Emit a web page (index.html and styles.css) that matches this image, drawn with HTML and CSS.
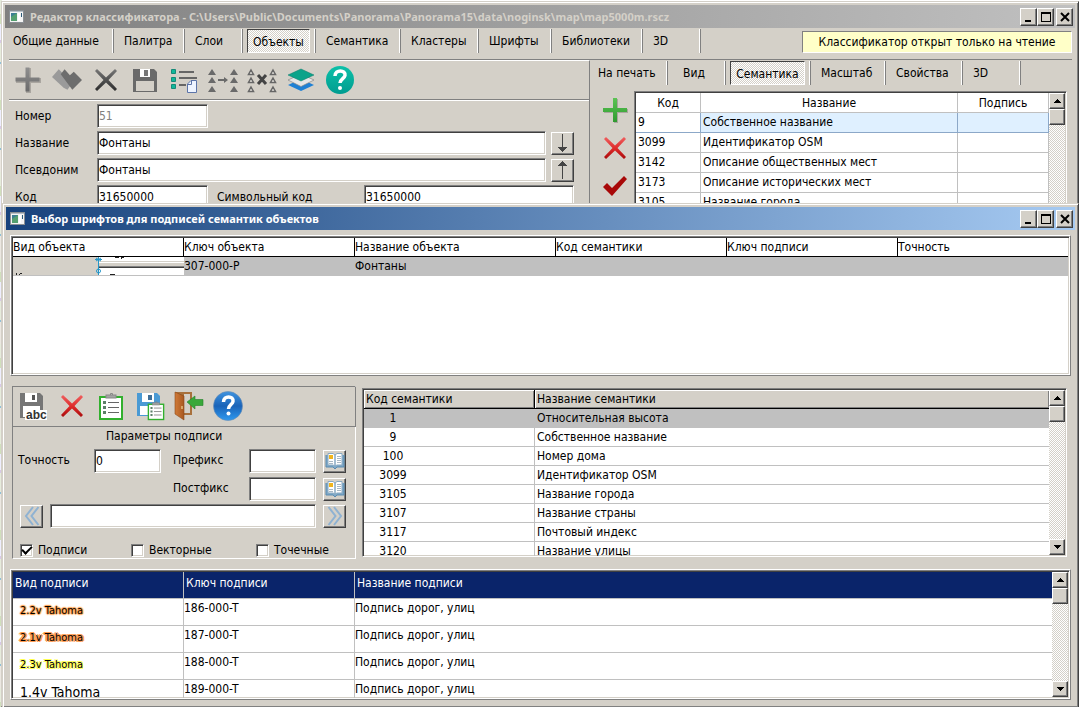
FILE: index.html
```html
<!DOCTYPE html>
<html lang="ru">
<head>
<meta charset="utf-8">
<title>Редактор классификатора</title>
<link rel="stylesheet" href="styles.css">
</head>
<body>
<svg class="defs" width="0" height="0" aria-hidden="true">
  <defs>
    <linearGradient id="gDark" x1="0" y1="0" x2="0" y2="1"><stop offset="0" stop-color="#777"/><stop offset="1" stop-color="#2c2c2c"/></linearGradient>
    <linearGradient id="gGrey" x1="0" y1="0" x2="0" y2="1"><stop offset="0" stop-color="#8f8f8f"/><stop offset="1" stop-color="#6a6a6a"/></linearGradient>
    <linearGradient id="gRed" x1="0" y1="0" x2="0" y2="1"><stop offset="0" stop-color="#f06060"/><stop offset=".55" stop-color="#dc2828"/><stop offset="1" stop-color="#a80c0c"/></linearGradient>
    <linearGradient id="gGreen" x1="0" y1="0" x2="0" y2="1"><stop offset="0" stop-color="#5cc454"/><stop offset="1" stop-color="#2f9a30"/></linearGradient>
    <linearGradient id="gTeal" x1="0" y1="0" x2="0" y2="1"><stop offset="0" stop-color="#0cc0a8"/><stop offset="1" stop-color="#009c90"/></linearGradient>
    <linearGradient id="gBlue" x1="0" y1="0" x2="0" y2="1"><stop offset="0" stop-color="#3f94e0"/><stop offset=".5" stop-color="#1a63b8"/><stop offset="1" stop-color="#2f9af0"/></linearGradient>
    <linearGradient id="gDoor" x1="0" y1="0" x2="1" y2="0"><stop offset="0" stop-color="#d07a38"/><stop offset="1" stop-color="#a85820"/></linearGradient>
    <symbol id="app" viewBox="0 0 15 13"><rect x=".5" y=".5" width="14" height="12" fill="#f4f4f4" stroke="#8a8f94"/><rect x="1" y="1" width="13" height="1" fill="#b8c0c8"/><rect x="2" y="3" width="6" height="8" fill="#3d7f92"/><path d="M2 11V7l6-4v8z" fill="#55a070"/><rect x="9" y="3" width="2" height="8" fill="#fff"/><rect x="12" y="3" width="1" height="4" fill="#2c5a78"/></symbol>
    <symbol id="cross" viewBox="0 0 24 24"><path d="M1 3 3 1l9 8.500L21 1l2 2-8.500 9L23 21l-2 2-9-8.500L3 23l-2-2 8.500-9z"/></symbol>
    <symbol id="book" viewBox="0 0 20 18"><path d="M1 3v12h7l2 2 2-2h7V3" fill="#7fa9c8" stroke="#5b8bb0"/><path d="M3 1.500h5l2 1.500v11l-2-1H3zM17 1.500h-5l-2 1.500v11l2-1h5z" fill="#fff" stroke="#88a9c2"/><rect x="4" y="3" width="4" height="4" fill="#f0b41e"/><path d="M4 9.500h4M4 11.500h4M12 4.500h4M12 6.500h4M12 8.500h4M12 10.500h4" stroke="#a9b8c4"/></symbol>
    <symbol id="chev" viewBox="0 0 16 20"><path d="M9 1 2 10l7 9M14.500 1l-7 9 7 9" fill="none" stroke="#8fb2d2" stroke-width="2"/></symbol>
    <symbol id="up" viewBox="0 0 7 4"><path d="M3 0h1v1h1v1h1v1h1v1H0V3h1V2h1V1h1z"/></symbol>
    <symbol id="min" viewBox="0 0 10 10"><path d="M1 8h6v2H1z"/></symbol>
    <symbol id="max" viewBox="0 0 10 10"><path d="M0 0h10v10H0zM1 2v7h8V2z" fill-rule="evenodd"/></symbol>
    <symbol id="close" viewBox="0 0 10 10"><path d="M1 1l8 8M9 1 1 9" stroke="#000" stroke-width="2"/></symbol>
    <symbol id="clip" viewBox="0 0 26 30"><path d="M12.500 5V2.500h2V5" fill="none" stroke="#888"/><rect x="2" y="6" width="22" height="22" fill="#fff" stroke="#32b02e" stroke-width="2"/><rect x="8" y="4" width="10" height="3" fill="#a4a4a4" stroke="#888"/><path d="M5 10h3v3H5zM5 15h3v3H5zM5 20h3v3H5z" fill="#5c8068"/><path d="M10 11.500h11M10 16.500h11M10 21.500h11" stroke="#666"/></symbol>
  </defs>
</svg>

<main class="desktop">
<div class="map-strip" aria-hidden="true"></div>

<section class="window editor" aria-label="Редактор классификатора">
  <header class="titlebar inactive">
    <svg class="app-icon"><use href="#app"/></svg>
    <h1>Редактор классификатора - C:\Users\Public\Documents\Panorama\Panorama15\data\noginsk\map\map5000m.rscz</h1>
    <div class="caption">
      <button aria-label="Свернуть"><svg><use href="#min"/></svg></button><button aria-label="Развернуть"><svg><use href="#max"/></svg></button><button class="x" aria-label="Закрыть"><svg><use href="#close"/></svg></button>
    </div>
  </header>

  <div class="topline">
    <nav class="tabs main-tabs">
      <button>Общие данные</button><button>Палитра</button><button>Слои</button><span class="active-tab"><button>Объекты</button></span><button>Семантика</button><button>Кластеры</button><button>Шрифты</button><button>Библиотеки</button><button>3D</button>
    </nav>
    <div class="notice">Классификатор открыт только на чтение</div>
  </div>

  <div class="editor-body">
    <div class="object-pane">
      <div class="toolbar main-toolbar">
        <button aria-label="Добавить"><svg viewBox="0 0 30 30"><path d="M13 3h5v10h10v5H18v10h-5V18H3v-5h10z" fill="#aaa6a0"/><path d="M12.500 2.500h4v10h10v4h-10v10h-4v-10h-10v-4h10z" fill="url(#gGrey)"/></svg></button>
        <button aria-label="Копировать"><svg viewBox="0 0 31 30"><path d="M0 12 7 4l14 14-5 7-4-2z" fill="#9a9a9a"/><path d="m9 9 4-5 5.500 6 4-3.500L31 15 21 25z" fill="#6d6d6d"/></svg></button>
        <button aria-label="Удалить"><svg viewBox="0 0 30 30" fill="url(#gDark)"><use href="#cross" x="3" y="3" width="24" height="24"/></svg></button>
        <button aria-label="Сохранить"><svg viewBox="0 0 30 30"><path d="M3 4h21l3 3v20H3z" fill="#6a6a6a"/><path d="M10 4h10v8H10z" fill="#fff"/><rect x="14" y="5" width="4" height="6" fill="#777"/><rect x="6" y="16" width="18" height="10" fill="#d4d0c8"/></svg></button>
        <button aria-label="Список"><svg viewBox="0 0 30 30"><path d="M2.500 4.500h4v4h-4zM2.500 12.500h4v4h-4zM2.500 19.500h4v4h-4z" fill="#10b89a" stroke="#168a78"/><path d="M10 7h15M10 13h18M10 20h7" stroke="#666" stroke-width="2"/><path d="M18.500 19l3.500-3.500h5.500v12h-9z" fill="#eef4ff" stroke="#5c74a8"/><path d="M18.500 19.500h4v-4" fill="none" stroke="#5c74a8"/></svg></button>
        <button aria-label="Заменить"><svg viewBox="0 0 30 30" fill="#6a6a6a"><path d="m4 4 4 6H0zM4 12l4 6H0zM4 21l4 6H0zM26 4l4 6h-8zM26 12l4 6h-8zM26 21l4 6h-8zM10 14h6v-2l4 3-4 3v-2h-6z"/></svg></button>
        <button aria-label="Исключить"><svg viewBox="0 0 30 30"><path d="m4 5 2.500 4.500h-5zM4 13l2.500 4.500h-5zM4 22l2.500 4.500h-5zM26 5l2.500 4.500h-5zM26 13l2.500 4.500h-5zM26 22l2.500 4.500h-5z" fill="#e8e6e0" stroke="#666" stroke-width="1.500"/><path d="m11 10 8 9M19 10l-8 9" stroke="#444" stroke-width="3"/></svg></button>
        <button aria-label="Слои"><svg viewBox="0 0 30 30"><path d="m2 20 13-6 13 6-13 6z" fill="#1f80d4"/><path d="m2 15 13-6 13 6-13 6.500z" fill="#e6e6e6" stroke="#888" stroke-width=".7"/><path d="m2 10 13-6 13 6-13 6z" fill="#0ba38a" stroke="#087a68" stroke-width=".5"/></svg></button>
        <button aria-label="Помощь"><svg viewBox="0 0 30 30"><circle cx="15" cy="15" r="14" fill="url(#gTeal)"/><path d="M10 11c0-7 11-6.500 10-.5-.5 3-5 3.500-5 7.500" fill="none" stroke="#fff" stroke-width="3.500"/><circle cx="15" cy="23" r="2" fill="#fff"/></svg></button>
      </div>
      <form class="object-form">
        <div class="field"><label for="num">Номер</label><input id="num" class="short" value="51" disabled></div>
        <div class="field"><label for="name">Название</label><input id="name" value="Фонтаны"><button type="button" class="sq" aria-label="Вниз"><svg viewBox="0 0 9 18"><path d="M4 0h1v13h4v1H8v1H7v1H6v1H5v1H4v-1H3v-1H2v-1H1v-1H0v-1h4z" fill="#444"/></svg></button></div>
        <div class="field"><label for="alias">Псевдоним</label><input id="alias" value="Фонтаны"><button type="button" class="sq" aria-label="Вверх"><svg viewBox="0 0 9 18"><path d="M4 18h1V5h4V4H8V3H7V2H6V1H5V0H4v1H3v1H2v1H1v1H0v1h4z" fill="#444"/></svg></button></div>
        <div class="field"><label for="code">Код</label><input id="code" class="short" value="31650000"><label class="second" for="sym">Символьный код</label><input id="sym" value="31650000"></div>
      </form>
    </div>

    <div class="side-pane">
      <nav class="tabs side-tabs">
        <button>На печать</button><button>Вид</button><span class="active-tab"><button>Семантика</button></span><button>Масштаб</button><button>Свойства</button><button>3D</button>
      </nav>
      <div class="side-body">
        <div class="side-tools">
          <button aria-label="Добавить"><svg viewBox="0 0 26 26"><path d="M12 2h4v10h10v4H16v10h-4V16H2v-4h10z" fill="#a9a59e"/><path d="M11 1h4v10h10v4H15v10h-4V15H1v-4h10z" fill="url(#gGreen)"/></svg></button>
          <button aria-label="Удалить"><svg viewBox="0 0 26 26" fill="url(#gRed)"><use href="#cross" x="1" y="1" width="24" height="24"/></svg></button>
          <button aria-label="Применить"><svg viewBox="0 0 26 26"><path d="m1 14 4-4 5 5L22 3l3 3-15 17z" fill="#a80808"/></svg></button>
        </div>
        <div class="sunken grid-box">
          <table class="semantics">
            <colgroup><col class="c-code"><col><col class="c-label"></colgroup>
            <thead><tr><th>Код</th><th>Название</th><th>Подпись</th></tr></thead>
            <tbody>
              <tr class="current"><td>9</td><td>Собственное название</td><td></td></tr>
              <tr><td>3099</td><td>Идентификатор OSM</td><td></td></tr>
              <tr><td>3142</td><td>Описание общественных мест</td><td></td></tr>
              <tr><td>3173</td><td>Описание исторических мест</td><td></td></tr>
              <tr><td>3105</td><td>Название города</td><td></td></tr>
            </tbody>
          </table>
          <div class="scroll"><button aria-label="Вверх"><svg><use href="#up"/></svg></button><i class="thumb"></i></div>
        </div>
      </div>
    </div>
  </div>
</section>

<section class="window fonts" aria-label="Выбор шрифтов">
  <header class="titlebar">
    <svg class="app-icon"><use href="#app"/></svg>
    <h1>Выбор шрифтов для подписей семантик объектов</h1>
    <div class="caption">
      <button aria-label="Свернуть"><svg><use href="#min"/></svg></button><button aria-label="Развернуть"><svg><use href="#max"/></svg></button><button class="x" aria-label="Закрыть"><svg><use href="#close"/></svg></button>
    </div>
  </header>

  <div class="fonts-body">
    <div class="raised objects-frame"><div class="sunken grid-box">
      <table class="objects">
        <colgroup><col class="w171"><col class="w171"><col class="w201"><col class="w171"><col class="w171"><col></colgroup>
        <thead><tr><th>Вид объекта</th><th>Ключ объекта</th><th>Название объекта</th><th>Код семантики</th><th>Ключ подписи</th><th>Точность</th></tr></thead>
        <tbody><tr><td class="preview"><svg width="171" height="18" viewBox="0 0 171 18" aria-hidden="true"><rect width="171" height="18" fill="#d4d0c8"/><rect x="85" width="86" height="5" fill="#fff"/><path d="M85 4.500h86" stroke="#d4d0c8"/><rect x="85" y="5" width="86" height="1" fill="#fff"/><rect x="86" y="10" width="85" height="8" fill="#fff"/><path d="M85 9.500h86" stroke="#808080"/><path d="M86 10.500h85M85.500 9v9" stroke="#404040"/><path d="M102 .500h4M108 .500h3M108.500 0v2M97 17.500h5M3.500 16v2M6 17.500h1M7 16.500h2" stroke="#222"/><path d="M85.500 0v18M82 2.500h7M83 1l5 3M88 1l-5 3" stroke="#2596c8"/><circle cx="85.500" cy="14" r="2" fill="none" stroke="#2596c8"/></svg></td><td>307-000-P</td><td>Фонтаны</td><td></td><td></td><td></td></tr></tbody>
      </table>
    </div></div>

    <div class="middle">
      <form class="params">
        <div class="toolbar param-toolbar">
          <button type="button" aria-label="Сохранить подпись"><svg viewBox="0 0 30 30"><path d="M2 2h20l3 3v22H2z" fill="#767676"/><path d="M7 2h12v9H7z" fill="#fff"/><rect x="14" y="4" width="3" height="5" fill="#555"/><path d="M5 15h17v11H5z" fill="#fff"/><rect x="7" y="19" width="22" height="10" fill="#fff"/><text x="8" y="28" class="abc">abc</text></svg></button>
          <button type="button" aria-label="Удалить"><svg viewBox="0 0 30 30" fill="url(#gRed)"><use href="#cross" x="3" y="3" width="24" height="24"/></svg></button>
          <button type="button" aria-label="Список"><svg viewBox="0 0 30 30"><use href="#clip" x="2" y="0" width="26" height="30"/></svg></button>
          <button type="button" aria-label="Сохранить список"><svg viewBox="0 0 30 30"><path d="M2 2h20l3 3v20H2z" fill="#4a9ad4"/><path d="M7 2h12v9H7z" fill="#fff"/><rect x="13" y="4" width="4" height="5" fill="#3f6f98"/><path d="M5 15h18v9H5z" fill="#fff"/><use href="#clip" x="12" y="9" width="18" height="21"/></svg></button>
          <button type="button" aria-label="Выход"><svg viewBox="0 0 30 30"><path d="M1 1h17v23h-8z" fill="#a8703c"/><path d="M10 3h6v19h-6z" fill="#d4d0c8"/><path d="m1 1 9 4v24l-9-6z" fill="url(#gDoor)" stroke="#8a4818" stroke-width=".6"/><path d="M8 15v3" stroke="#fff0b0"/><path d="m13 11 8-6v3.500h8v6h-8V18z" fill="#39a83a" stroke="#23802a" stroke-width=".6"/></svg></button>
          <button type="button" aria-label="Помощь"><svg viewBox="0 0 30 30"><circle cx="15" cy="15" r="14.500" fill="url(#gBlue)" stroke="#6a8cb0" stroke-width=".6"/><path d="M10.500 11c0-7 10.500-6.500 9.500-.5-.5 3-4.500 3.500-4.500 7.500" fill="none" stroke="#fff" stroke-width="3.500"/><circle cx="15.500" cy="22.500" r="2" fill="#fff"/></svg></button>
        </div>
        <div class="param-title">Параметры подписи</div>
        <div class="param-grid">
          <label for="prec">Точность</label><input id="prec" value="0">
          <label class="third" for="prefix">Префикс</label><input id="prefix"><button type="button" class="sq" aria-label="Выбрать префикс"><svg class="book"><use href="#book"/></svg></button>
          <label class="third" for="postfix">Постфикс</label><input id="postfix"><button type="button" class="sq" aria-label="Выбрать постфикс"><svg class="book"><use href="#book"/></svg></button>
        </div>
        <div class="pager">
          <button type="button" class="sq" aria-label="Назад"><svg class="chev"><use href="#chev"/></svg></button>
          <input aria-label="Текст подписи">
          <button type="button" class="sq" aria-label="Вперёд"><svg class="chev flip"><use href="#chev"/></svg></button>
        </div>
        <div class="checks">
          <label><input type="checkbox" checked>Подписи</label>
          <label><input type="checkbox">Векторные</label>
          <label><input type="checkbox">Точечные</label>
        </div>
      </form>

      <div class="sunken grid-box codes-box">
        <table class="codes">
          <colgroup><col class="w171"><col></colgroup>
          <thead><tr><th>Код семантики</th><th>Название семантики</th></tr></thead>
          <tbody>
            <tr class="selected"><td>1</td><td>Относительная высота</td></tr>
            <tr><td>9</td><td>Собственное название</td></tr>
            <tr><td>100</td><td>Номер дома</td></tr>
            <tr><td>3099</td><td>Идентификатор OSM</td></tr>
            <tr><td>3105</td><td>Название города</td></tr>
            <tr><td>3107</td><td>Название страны</td></tr>
            <tr><td>3117</td><td>Почтовый индекс</td></tr>
            <tr><td>3120</td><td>Название улицы</td></tr>
          </tbody>
        </table>
        <div class="scroll"><button aria-label="Вверх"><svg><use href="#up"/></svg></button><i class="thumb"></i><button class="down" aria-label="Вниз"><svg><use href="#up"/></svg></button></div>
      </div>
    </div>

    <div class="raised labels-frame"><div class="sunken grid-box">
      <table class="labels">
        <colgroup><col class="w171"><col class="w171"><col></colgroup>
        <thead><tr><th>Вид подписи</th><th>Ключ подписи</th><th>Название подписи</th></tr></thead>
        <tbody>
          <tr><td class="sample orange">2.2v Tahoma</td><td>186-000-T</td><td>Подпись дорог, улиц</td></tr>
          <tr><td class="sample amber">2.1v Tahoma</td><td>187-000-T</td><td>Подпись дорог, улиц</td></tr>
          <tr><td class="sample yellow">2.3v Tahoma</td><td>188-000-T</td><td>Подпись дорог, улиц</td></tr>
          <tr><td class="sample plain">1.4v Tahoma</td><td>189-000-T</td><td>Подпись дорог, улиц</td></tr>
        </tbody>
      </table>
      <div class="scroll"><button aria-label="Вверх"><svg><use href="#up"/></svg></button><i class="thumb"></i><button class="down" aria-label="Вниз"><svg><use href="#up"/></svg></button></div>
    </div></div>
  </div>
</section>
</main>
</body>
</html>
```
FILE: styles.css
```css
* { box-sizing: border-box; }

:root {
  --face: #d4d0c8;
  --shadow: #808080;
  --dark: #404040;
  --line: #c0c0c0;
}

body {
  margin: 0;
  background: #fff;
  color: #000;
  font: 12px/16px "DejaVu Sans Condensed", "DejaVu Sans", sans-serif;
}

button, input { font: inherit; color: inherit; margin: 0; padding: 0; border-radius: 0; outline: 0; }
button { background: none; border: 0; }
svg { display: block; }
.defs { position: absolute; }

.desktop { position: relative; height: 100vh; min-height: 480px; overflow: hidden; }

.map-strip {
  position: absolute;
  left: 0; top: 0; bottom: 0;
  width: 2px;
  background: repeating-linear-gradient(#e6ecdc 0 14px, #d0e0bc 14px 24px, #eef 24px 40px, #d8c8e8 40px 43px, #e6ecdc 43px 62px, #90c0d8 62px 64px, #ece8e2 64px 86px);
}

/* windows */
.window {
  position: absolute;
  right: 1px;
  display: flex;
  flex-direction: column;
  padding: 3px;
  background: var(--face);
  border: 1px solid;
  border-color: var(--face) var(--dark) var(--dark) var(--face);
  box-shadow: inset 1px 1px #fff, inset -1px -1px var(--shadow);
}
.editor { left: 1px; top: 1px; bottom: 0; }
.fonts { left: 2px; top: 203px; bottom: 0; padding-bottom: 1px; border-bottom: 0; }

.titlebar {
  display: flex;
  align-items: center;
  flex: none;
  height: 23px;
  padding: 0 2px 0 4px;
  background: linear-gradient(90deg, #17427c, #a6caf2);
  color: #fff;
}
.titlebar.inactive { background: linear-gradient(90deg, #808080, #c0c0c0); color: var(--face); }
.titlebar h1 { flex: 1; margin: 0 0 0 6px; font: bold 11px/16px "Noto Sans", "DejaVu Sans Condensed", sans-serif; white-space: nowrap; overflow: hidden; }
.app-icon { width: 15px; height: 13px; }
.caption { display: flex; }
.caption button { display: grid; place-items: center; width: 17px; height: 18px; }
.caption .x { margin-left: 2px; }
.caption svg { width: 10px; height: 10px; }

.caption button, .scroll button, .thumb, .sq {
  background: var(--face);
  border: 1px solid;
  border-color: #fff var(--dark) var(--dark) #fff;
  box-shadow: inset -1px -1px var(--shadow);
}

/* tabs */
.topline { display: flex; justify-content: space-between; align-items: flex-start; height: 31px; padding: 1px 3px 0 0; }
.tabs { display: grid; height: 24px; }
.tabs > button, .active-tab { border-right: 1px solid var(--shadow); box-shadow: inset -1px 0 #fff; white-space: nowrap; }
.tabs > button { text-align: left; padding-left: 10px; }
.active-tab { display: flex; padding: 0 5px 0 4px; }
.active-tab button {
  flex: 1;
  padding-top: 2px;
  border: 1px solid;
  border-color: var(--dark) #fff #fff var(--dark);
  background: conic-gradient(#fff 25%, var(--face) 0 50%, #fff 0 75%, var(--face) 0) 0 0 / 2px 2px;
}
.main-tabs { grid-template-columns: 109px 71px 58px 73px 85px 78px 73px 91px 58px; }
.main-tabs > button:first-child, .side-tabs > button:first-child { padding-left: 8px; }
.side-tabs { grid-template-columns: 78px 58px 85px 75px 77px 58px; }
.side-tabs > button:nth-child(2) { padding-left: 15px; }

.notice {
  width: 270px;
  margin-top: 2px;
  line-height: 20px;
  text-align: center;
  white-space: nowrap;
  background: #ffffc8;
  border: 1px solid;
  border-color: var(--shadow) #fff #fff var(--shadow);
}

/* editor */
.editor-body { display: flex; flex: 1; min-height: 0; margin: 0 3px 0 4px; border-top: 1px solid var(--shadow); overflow: hidden; }
.object-pane { flex: 1; min-width: 0; border-top: 1px solid #fff; border-right: 1px solid var(--shadow); }
.toolbar { display: flex; gap: 9px; align-items: center; }
.toolbar button, .toolbar svg { width: 30px; height: 30px; }
.main-toolbar { height: 39px; padding-left: 4px; border-bottom: 1px solid var(--shadow); box-shadow: 0 1px #fff; }

.object-form { display: grid; gap: 3px; padding: 4px 15px 0 6px; }
.field { display: flex; align-items: center; }
.field label { width: 82px; flex: none; }
.field .second { width: 147px; margin-left: 9px; }
.field input { flex: 1; min-width: 0; }
.field input.short { flex: none; width: 111px; }
.field .sq { margin-left: 5px; }
.sq { display: grid; place-items: center; width: 23px; height: 23px; flex: none; }
.sq svg { width: 9px; height: 18px; }
.sq .book { width: 20px; height: 18px; }
.sq .chev { width: 16px; height: 20px; }
.sq .flip { transform: scaleX(-1); }

input:not([type="checkbox"]) {
  height: 24px;
  width: 100%;
  padding: 0 1px;
  background: #fff;
  border: 1px solid;
  border-color: var(--shadow) #fff #fff var(--shadow);
  box-shadow: inset 1px 1px var(--dark), inset -1px -1px var(--face);
}
input:disabled { color: var(--shadow); }

.side-pane { width: 482px; display: flex; flex-direction: column; }
.side-tabs { margin-top: 1px; }
.side-body { display: flex; flex: 1; min-height: 0; margin: 6px 5px 0 0; }
.side-tools { display: grid; align-content: start; gap: 12px; width: 44px; padding: 6px 0 0 12px; }
.side-tools svg { width: 26px; height: 26px; }

/* frames and grids */
.raised { border: 1px solid; border-color: #fff var(--shadow) var(--shadow) #fff; display: flex; min-height: 0; }
.sunken {
  flex: 1;
  min-width: 0;
  background: #fff;
  border: 1px solid;
  border-color: var(--shadow) #fff #fff var(--shadow);
  padding: 1px;
  box-shadow: inset 1px 1px var(--dark), inset -1px -1px var(--face);
}
.grid-box { display: flex; align-items: flex-start; overflow: hidden; }
table { flex: 1; min-width: 0; table-layout: fixed; border-spacing: 0; }
th, td { padding: 0; text-align: left; font-weight: normal; white-space: nowrap; overflow: hidden; }
.w171 { width: 171px; }
.w201 { width: 201px; }

.scroll {
  align-self: stretch;
  display: flex;
  flex-direction: column;
  width: 16px;
  background: conic-gradient(#fff 25%, var(--face) 0 50%, #fff 0 75%, var(--face) 0) 0 0 / 2px 2px;
}
.scroll button { display: grid; place-items: center; height: 16px; width: 16px; flex: none; }
.scroll svg { width: 7px; height: 4px; }
.thumb { height: 16px; flex: none; }
.down { margin-top: auto; }
.down svg { transform: scaleY(-1); }

.semantics th { height: 20px; text-align: center; border: solid var(--line); border-width: 0 1px 1px 0; }
.semantics td { height: 20px; padding: 0 2px 2px; border: solid var(--line); border-width: 0 1px 1px 0; }
.semantics .current td { background: #dff0ff; border-color: #8ca8c8; }
.semantics .current td:first-child { background: #fff; }
.c-code { width: 65px; }
.c-label { width: 91px; }

/* fonts window */
.fonts-body { display: flex; flex-direction: column; gap: 10px; flex: 1; min-height: 0; padding: 5px 4px 6px 4px; }
.objects-frame { flex: 1; }

.objects th { height: 19px; border-bottom: 1px solid #000; border-right: 1px solid #000; }
.objects td { height: 19px; background: var(--line); vertical-align: top; padding-top: 1px; }
.objects th:last-child { border-right: 0; }
.objects .preview { padding: 0; }

.middle { display: flex; gap: 6px; align-items: flex-start; }
.params { flex: none; width: 344px; margin-left: 2px; height: 173px; border: 1px solid; border-color: var(--shadow) #fff #fff var(--shadow); }
.param-toolbar { height: 40px; padding: 0 0 2px 5px; border-bottom: 1px solid var(--shadow); box-shadow: 1px 0 var(--shadow); }
.abc { font: bold 12px "Liberation Sans", sans-serif; fill: #333; }
.param-title { padding: 0 0 3px 93px; line-height: 18px; }
.param-grid { display: grid; grid-template-columns: 76px 67px 12px 76px 67px 7px 24px; row-gap: 4px; padding: 1px 0 0 5px; align-items: center; }
.param-grid label { padding-bottom: 3px; }
.param-grid .third { grid-column: 4; }
.param-grid .sq { grid-column: 7; }
.pager { display: flex; align-items: center; gap: 7px; padding: 3px 9px 0 7px; }
.pager input { flex: 1; }
.checks { display: grid; grid-template-columns: 111px 125px auto; padding: 15px 0 0 7px; }
.checks label { display: flex; align-items: center; gap: 5px; line-height: 14px; }
.checks input {
  appearance: none;
  width: 13px;
  height: 13px;
  background: #fff;
  border: 1px solid;
  border-color: var(--shadow) #fff #fff var(--shadow);
  box-shadow: inset 1px 1px var(--dark), inset -1px -1px var(--face);
  display: grid;
  place-items: center;
}
.checks input:checked::before { content: ""; width: 8px; height: 4px; border: solid #000; border-width: 0 0 2px 2px; transform: translateY(-1px) rotate(-45deg); }

.codes-box { height: 169px; margin: 2px 4px 0 0; }
.codes th { height: 19px; padding-left: 2px; background: var(--face); border-bottom: 1px solid #000; border-right: 1px solid #000; box-shadow: inset 1px 1px #fff, inset -1px -1px var(--shadow); }
.codes th:last-child { border-right: 0; }
.codes td { height: 19px; padding-left: 2px; border-bottom: 1px solid var(--line); border-right: 1px solid var(--line); }
.codes td:first-child { text-align: center; padding: 0 112px 0 0; }
.codes td:last-child { border-right: 0; }
.codes .selected td { background: var(--line); }

.labels-frame { height: 131px; }
.labels th { height: 27px; padding: 0 0 5px 2px; background: #0a246a; color: #fff; border: solid var(--line); border-width: 0 1px 1px 0; }
.labels td { height: 27px; border: solid var(--line); border-width: 0 1px 1px 0; vertical-align: top; padding-top: 1px; }
.labels th:last-child, .labels td:last-child { border-right: 0; }
.labels .sample { padding: 4px 0 0 7px; font-size: 11px; }
.labels .plain { font-size: 14px; }
.orange { text-shadow: 1px 0 1px #ff9a40, -1px 0 1px #ff9a40, 0 1px 1px #ff9a40, 0 -1px 1px #ff9a40, 0 0 2px #ff9a40; }
.amber { text-shadow: 1px 1px 0 #ff9c50, -1px 1px 0 #ff9c50, 1px -1px 0 #ff9c50, -1px -1px 0 #ff9c50, 2px 0 #ff9c50, -2px 0 #ff9c50; }
.yellow { text-shadow: 1px 1px 0 #ffff50, -1px 1px 0 #ffff50, 1px -1px 0 #ffff50, -1px -1px 0 #ffff50; }
```
